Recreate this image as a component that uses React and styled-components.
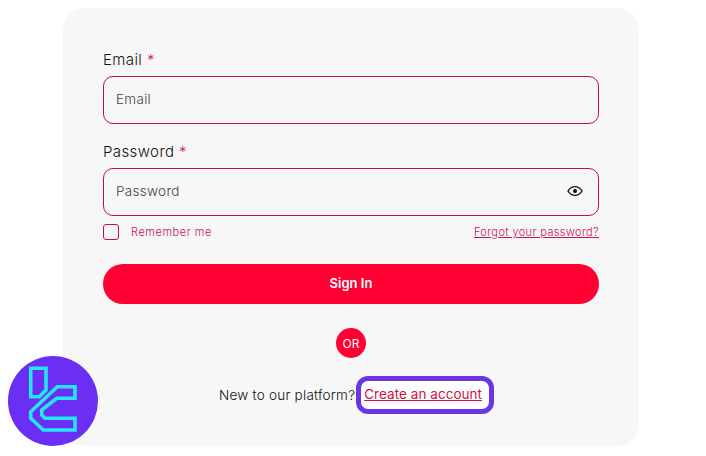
import React from "react";
import styled, { createGlobalStyle } from "styled-components";

const GlobalStyle = createGlobalStyle`
  html, body {
    margin: 0;
    background: #ffffff;
    font-family: "Inter", "Liberation Sans", sans-serif;
    font-weight: 300;
  }
`;

const Page = styled.div`
  position: relative;
  width: 706px;
  height: 456px;
  overflow: hidden;
  padding: 8px 0 0 63px;
  box-sizing: border-box;
`;

const Card = styled.form`
  width: 576px;
  height: 438px;
  box-sizing: border-box;
  padding: 42px 40px 0;
  background: #f7f7f7;
  border-radius: 22px;
  display: flex;
  flex-direction: column;
`;

const Field = styled.div`
  margin-bottom: 18px;
`;

const Label = styled.label`
  display: block;
  font-size: 15px;
  line-height: 20px;
  letter-spacing: 0.4px;
  color: #111;
  margin-bottom: 6px;
`;

const Required = styled.span`
  color: #d2194f;
`;

const InputWrap = styled.div`
  height: 48px;
  box-sizing: border-box;
  border: 1px solid #c2113f;
  border-radius: 10px;
  padding: 0 15px 3px 12px;
  display: flex;
  align-items: center;
  justify-content: space-between;
`;

const Input = styled.input`
  flex: 1;
  padding: 0;
  border: 0;
  outline: 0;
  background: transparent;
  font-family: inherit;
  font-weight: 300;
  font-size: 13.5px;
  letter-spacing: 0.3px;
  color: #555;

  &::placeholder {
    color: #444;
    opacity: 1;
  }
`;

const OptionsRow = styled.div`
  display: flex;
  align-items: center;
  justify-content: space-between;
  margin-top: -10px;
`;

const Remember = styled.label`
  display: flex;
  align-items: center;
  gap: 12px;
  font-size: 11px;
  letter-spacing: 0.55px;
  color: #cf1450;
`;

const Box = styled.span`
  width: 14px;
  height: 14px;
  border: 1px solid #c2113f;
  border-radius: 3px;
`;

const Forgot = styled.a`
  font-size: 11px;
  letter-spacing: 0.38px;
  color: #cf1450;
  text-decoration: underline;
`;

const SignIn = styled.button`
  margin-top: 24px;
  height: 40px;
  padding: 0 0 2px;
  border: 0;
  border-radius: 20px;
  background: #ff0033;
  color: #fff;
  font-family: inherit;
  font-size: 13px;
  font-weight: 600;
`;

const OrBadge = styled.div`
  align-self: center;
  margin-top: 24px;
  width: 30px;
  height: 30px;
  border-radius: 50%;
  background: #ff0033;
  color: #fff;
  font-size: 12px;
  font-weight: 400;
  display: flex;
  align-items: center;
  justify-content: center;
`;

const SignUpRow = styled.div`
  margin-top: 18px;
  padding-left: 11px;
  display: flex;
  align-items: center;
  justify-content: center;
  font-size: 13.5px;
  letter-spacing: 0.25px;
  color: #111;
`;

const Highlight = styled.span`
  margin-left: 1px;
  border: 5px solid #6a35e8;
  border-radius: 12px;
  background: #fff;
  padding: 4px 7px 6px 3px;
  line-height: 18px;
  letter-spacing: 0.05px;
  display: inline-flex;
`;

const CreateLink = styled.a`
  color: #d40f3f;
  font-weight: 400;
  text-decoration: underline;
`;

const Logo = styled.svg`
  position: absolute;
  left: 8px;
  top: 356px;
  width: 90px;
  height: 90px;
`;

function EyeIcon() {
  return (
    <svg width="16" height="16" viewBox="0 0 16 16" fill="none">
      <path
        d="M1 8c1.7-3 4-4.400 7-4.400s5.300 1.400 7 4.400c-1.700 3-4 4.400-7 4.400S2.700 11 1 8z"
        stroke="#111"
        strokeWidth="1.4"
      />
      <circle cx="8" cy="8" r="2" fill="#111" />
    </svg>
  );
}

function App() {
  return (
    <>
      <GlobalStyle />
      <Page>
        <Card>
          <Field>
            <Label>
              Email <Required>*</Required>
            </Label>
            <InputWrap>
              <Input placeholder="Email" />
            </InputWrap>
          </Field>
          <Field>
            <Label>
              Password <Required>*</Required>
            </Label>
            <InputWrap>
              <Input placeholder="Password" />
              <EyeIcon />
            </InputWrap>
          </Field>
          <OptionsRow>
            <Remember>
              <Box />
              Remember me
            </Remember>
            <Forgot href="#">Forgot your password?</Forgot>
          </OptionsRow>
          <SignIn type="button">Sign In</SignIn>
          <OrBadge>OR</OrBadge>
          <SignUpRow>
            New to our platform?
            <Highlight>
              <CreateLink href="#">Create an account</CreateLink>
            </Highlight>
          </SignUpRow>
        </Card>
        <Logo viewBox="0 0 90 90">
          <circle cx="45" cy="45" r="45" fill="#6a2ff2" />
          <g fill="none" stroke="#25e6fb" strokeWidth="3.6">
            <path d="M22.700 12.300H38V34L31.300 40.700H22.700Z" />
            <path d="M49.300 30.700H67V42.300H48.700L33.700 54V59L37 62.300H67V74H35.300L22.700 62.300V55.700Z" />
          </g>
        </Logo>
      </Page>
    </>
  );
}

export default App;
